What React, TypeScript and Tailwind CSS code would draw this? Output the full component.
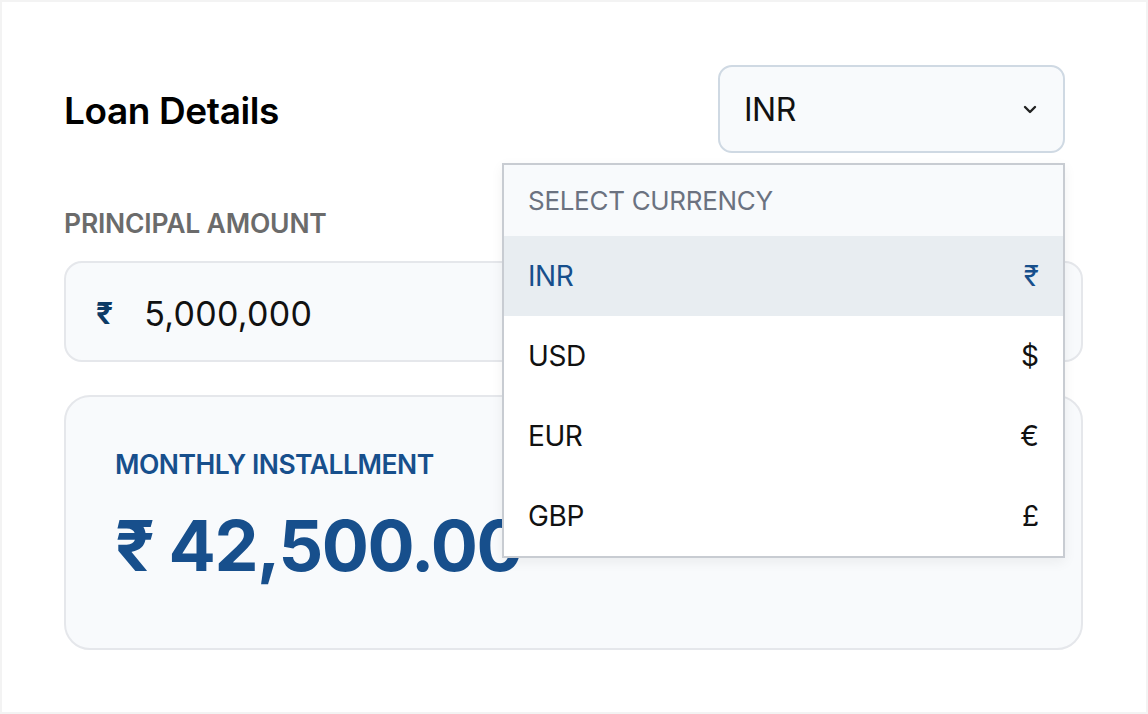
import React from "react";

const items = [
  { code: "INR", sym: "₹", active: true },
  { code: "USD", sym: "$", active: false },
  { code: "EUR", sym: "€", active: false },
  { code: "GBP", sym: "£", active: false },
];

export default function App() {
  return (
    <div
      className="w-[1148px] h-[714px] bg-white border-2 border-[#f3f3f3] overflow-hidden"
      style={{ fontFamily: "Inter, 'Noto Sans', sans-serif" }}
    >
      <div className="pl-[62px] pr-[63px] pt-[63px]">
        <div className="relative flex items-center justify-between h-[88px]">
          <h1 className="text-[37px] font-semibold text-black tracking-[-0.4px] pt-[4px]">Loan Details</h1>
          <div className="mr-[18px] w-[347px] h-[88px] rounded-[14px] border-2 border-[#cfd9e3] bg-[#f8fafc] flex items-center justify-between pl-[24px] pr-[26px]">
            <span className="text-[32px] text-[#111] tracking-[-0.5px] pt-[2px]">INR</span>
            <svg width="14" height="9" viewBox="0 0 14 9" fill="none">
              <path d="M2 2l5 5 5-5" stroke="#222" strokeWidth="2.4" strokeLinecap="round" strokeLinejoin="round" />
            </svg>
          </div>
          <div className="absolute right-[18px] top-[98px] w-[563px] z-10 bg-white border-2 border-[#c8ccd2] shadow-[0_4px_12px_rgba(0,0,0,0.06)]">
            <div className="h-[71px] bg-[#f8fafc] flex items-center px-[24px]">
              <span className="text-[26px] text-[#6b7280] tracking-[-0.3px]">SELECT CURRENCY</span>
            </div>
            {items.map((it) => (
              <div
                key={it.code}
                className={
                  it.active
                    ? "h-[80px] bg-[#e8edf1] flex items-center justify-between px-[24px] text-[#174f8c]"
                    : "h-[80px] bg-white flex items-center justify-between px-[24px] text-[#111]"
                }
              >
                <span className="text-[28px] tracking-[-0.4px]">{it.code}</span>
                <span className="text-[28px]">{it.sym}</span>
              </div>
            ))}
          </div>
        </div>

        <div className="mt-[54px] text-[26.5px] font-semibold text-[#6b6b6b] tracking-[-0.2px] leading-[32px]">
          PRINCIPAL AMOUNT
        </div>
        <div className="mt-[22px] h-[101px] rounded-[18px] border-2 border-[#e5e7eb] bg-[#f8fafc] flex items-center pl-[30px] pt-[3px]">
          <span className="text-[30px] font-bold text-[#0d3b66]">₹</span>
          <span className="ml-[31px] text-[34px] text-[#111] tracking-[0.3px]">5,000,000</span>
        </div>

        <div className="mt-[33px] h-[255px] rounded-[26px] border-2 border-[#e5e7eb] bg-[#f8fafc] pl-[49px] pt-[51px]">
          <div className="text-[26.5px] font-semibold text-[#174f8c] tracking-[-0.5px] leading-[32px]">
            MONTHLY INSTALLMENT
          </div>
          <div className="mt-[26px] text-[70px] font-bold text-[#174f8c] tracking-[-1.5px] leading-[80px]">
            ₹ 42,500.00
          </div>
        </div>
      </div>
    </div>
  );
}
